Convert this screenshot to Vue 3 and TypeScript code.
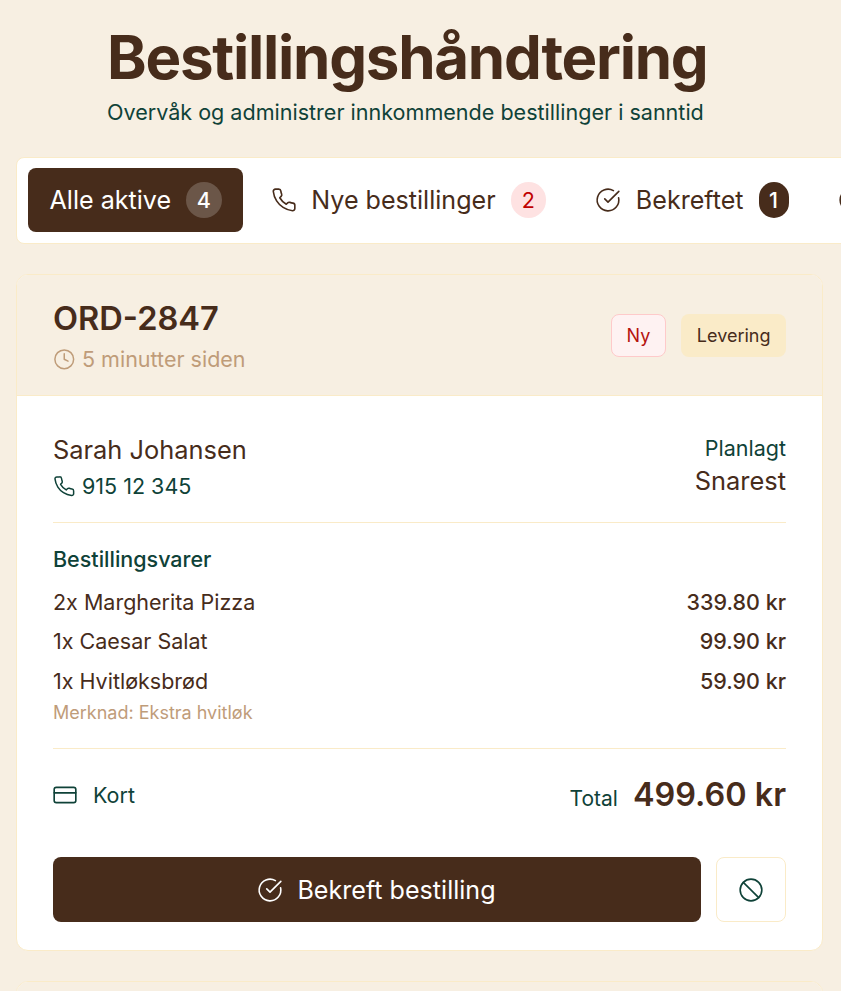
<script setup lang="ts">
const items = [
  { name: '2x Margherita Pizza', price: '339.80 kr' },
  { name: '1x Caesar Salat', price: '99.90 kr' },
  { name: '1x Hvitløksbrød', price: '59.90 kr', note: 'Merknad: Ekstra hvitløk' },
]
</script>

<template>
  <div class="page">
    <header class="head">
      <h1>Bestillingshåndtering</h1>
      <p>Overvåk og administrer innkommende bestillinger i sanntid</p>
    </header>

    <nav class="tabs">
      <button class="tab active">
        <span>Alle aktive</span>
        <span class="count count-glass">4</span>
      </button>
      <button class="tab">
        <svg class="ico" viewBox="0 0 24 24"><path d="M22 16.92v3a2 2 0 0 1-2.18 2 19.79 19.79 0 0 1-8.63-3.07 19.5 19.5 0 0 1-6-6 19.79 19.79 0 0 1-3.07-8.67A2 2 0 0 1 4.11 2h3a2 2 0 0 1 2 1.72 12.84 12.84 0 0 0 .7 2.81 2 2 0 0 1-.45 2.11L8.09 9.91a16 16 0 0 0 6 6l1.27-1.27a2 2 0 0 1 2.11-.45 12.84 12.84 0 0 0 2.81.7A2 2 0 0 1 22 16.92z" /></svg>
        <span>Nye bestillinger</span>
        <span class="count count-red">2</span>
      </button>
      <button class="tab">
        <svg class="ico" viewBox="0 0 24 24"><path d="M21.801 10A10 10 0 1 1 17 3.335" /><path d="m9 11 3 3L22 4" /></svg>
        <span>Bekreftet</span>
        <span class="count count-dark">1</span>
      </button>
      <button class="tab">
        <svg class="ico" viewBox="0 0 24 24"><circle cx="12" cy="12" r="10" /><polyline points="12 6 12 12 16 14" /></svg>
        <span>Tilbereder</span>
        <span class="count count-dark">1</span>
      </button>
    </nav>

    <section v-for="n in 2" :key="n" class="card">
      <div class="card-head">
        <div class="order">
          <h2>ORD-2847</h2>
          <div class="age">
            <svg class="ico ico-sm" viewBox="0 0 24 24"><circle cx="12" cy="12" r="10" /><polyline points="12 6 12 12 16 14" /></svg>
            <span>5 minutter siden</span>
          </div>
        </div>
        <div class="tags">
          <span class="tag tag-new">Ny</span>
          <span class="tag tag-kind">Levering</span>
        </div>
      </div>

      <div class="card-body">
        <div class="customer">
          <div>
            <div class="cust-name">Sarah Johansen</div>
            <div class="cust-phone">
              <svg class="ico ico-sm" viewBox="0 0 24 24"><path d="M22 16.92v3a2 2 0 0 1-2.18 2 19.79 19.79 0 0 1-8.63-3.07 19.5 19.5 0 0 1-6-6 19.79 19.79 0 0 1-3.07-8.67A2 2 0 0 1 4.11 2h3a2 2 0 0 1 2 1.72 12.84 12.84 0 0 0 .7 2.81 2 2 0 0 1-.45 2.11L8.09 9.91a16 16 0 0 0 6 6l1.27-1.27a2 2 0 0 1 2.11-.45 12.84 12.84 0 0 0 2.81.7A2 2 0 0 1 22 16.92z" /></svg>
              <span>915 12 345</span>
            </div>
          </div>
          <div class="sched">
            <div class="sched-label">Planlagt</div>
            <div class="sched-value">Snarest</div>
          </div>
        </div>

        <div class="items">
          <h3>Bestillingsvarer</h3>
          <div v-for="item in items" :key="item.name" class="item">
            <div class="item-row">
              <span>{{ item.name }}</span>
              <span class="price">{{ item.price }}</span>
            </div>
            <div v-if="item.note" class="note">{{ item.note }}</div>
          </div>
        </div>

        <div class="summary">
          <div class="pay">
            <svg class="ico" viewBox="0 0 24 24"><rect x="2" y="5" width="20" height="14" rx="2" /><line x1="2" y1="10" x2="22" y2="10" /></svg>
            <span>Kort</span>
          </div>
          <div class="total">
            <span class="total-label">Total</span>
            <span class="total-value">499.60 kr</span>
          </div>
        </div>

        <div class="actions">
          <button class="confirm">
            <svg class="ico" viewBox="0 0 24 24"><path d="M21.801 10A10 10 0 1 1 17 3.335" /><path d="m9 11 3 3L22 4" /></svg>
            <span>Bekreft bestilling</span>
          </button>
          <button class="cancel" aria-label="Avvis">
            <svg class="ico" viewBox="0 0 24 24"><circle cx="12" cy="12" r="10" /><path d="m4.9 4.9 14.2 14.2" /></svg>
          </button>
        </div>
      </div>
    </section>
  </div>
</template>

<style scoped>
.page {
  box-sizing: border-box;
  width: 841px;
  height: 991px;
  overflow: hidden;
  padding: 0 18px 0 16px;
  background: #f7efe2;
  color: #472c1b;
  font-family: Inter, "Liberation Sans", sans-serif;
}
.head {
  padding: 24px 0 0 91px;
}
h1 {
  margin: 0;
  font-size: 60px;
  line-height: 66px;
  font-weight: 700;
  letter-spacing: -1.25px;
}
.head p {
  margin: 8px 0 0;
  font-size: 21.55px;
  line-height: 29px;
  color: #0f4238;
}
.tabs {
  display: flex;
  gap: 7.7px;
  width: max-content;
  margin-top: 30px;
  padding: 10px 11px 11px;
  background: #fff;
  border: 1px solid #faebc8;
  border-radius: 8px;
}
.tab {
  display: flex;
  align-items: center;
  gap: 15px;
  height: 64px;
  padding: 0 21px 0 21.5px;
  border: 0;
  border-radius: 8px;
  background: transparent;
  color: #472c1b;
  font: 400 25.1px Inter, "Liberation Sans", sans-serif;
}
.tab .ico {
  margin-right: -0.5px;
}
.tab.active {
  background: #472c1b;
  color: #fff;
}
.count {
  display: flex;
  align-items: center;
  justify-content: center;
  min-width: 35.5px;
  height: 36px;
  border-radius: 18px;
  font-size: 21.5px;
  font-weight: 500;
  box-sizing: border-box;
}
.count-glass {
  background: rgba(255, 255, 255, 0.2);
}
.count-red {
  background: #fee2e2;
  color: #c00000;
  font-weight: 400;
}
.count-dark {
  min-width: 30px;
  background: #472c1b;
  color: #fff;
}
.ico {
  flex: none;
  width: 26px;
  height: 26px;
  margin: 0 -1px;
  fill: none;
  stroke: currentColor;
  stroke-width: 1.5;
  stroke-linecap: round;
  stroke-linejoin: round;
}
.ico-sm {
  width: 22.5px;
  height: 22.5px;
  margin: 0;
  stroke-width: 1.6;
}
.card {
  margin-top: 30px;
  background: #fff;
  border: 1px solid #faebc8;
  border-radius: 12px;
  overflow: hidden;
}
.card-head {
  display: flex;
  justify-content: space-between;
  align-items: center;
  height: 121px;
  box-sizing: border-box;
  padding: 0 36px;
  background: #f7efe2;
  border-bottom: 1px solid #faebc8;
}
.order {
  padding-top: 2px;
}
h2 {
  margin: 0;
  font-size: 32.6px;
  line-height: 40px;
  font-weight: 600;
}
.age {
  display: flex;
  align-items: center;
  gap: 6.5px;
  margin-top: 6px;
  color: #bf9c79;
  font-size: 21.5px;
  line-height: 30px;
}
.tags {
  display: flex;
  gap: 15px;
}
.tag {
  display: flex;
  align-items: center;
  box-sizing: border-box;
  height: 43px;
  padding: 0 15.5px;
  border-radius: 8px;
  font-size: 18px;
  font-weight: 400;
}
.tag-new {
  padding: 0 15px;
  background: #fef2f2;
  border: 1px solid #fecaca;
  color: #b5140f;
}
.tag-kind {
  background: #faebc8;
  color: #472c1b;
}
.card-body {
  padding: 36px 36px 28px;
}
.customer {
  display: flex;
  justify-content: space-between;
  padding-bottom: 18px;
  border-bottom: 1px solid #faebc8;
}
.cust-name {
  font-size: 25.4px;
  line-height: 36px;
  font-weight: 400;
}
.cust-phone {
  display: flex;
  align-items: center;
  gap: 6.5px;
  color: #0f4238;
  font-size: 21.5px;
  line-height: 36px;
}
.sched {
  padding-top: 2px;
  text-align: right;
}
.sched-label {
  color: #0f4238;
  font-size: 21.5px;
  line-height: 28px;
}
.sched-value {
  margin-top: 3px;
  font-size: 25.4px;
  line-height: 32px;
  font-weight: 400;
}
.items {
  padding: 20px 0 23px;
  border-bottom: 1px solid #faebc8;
}
h3 {
  margin: 0 0 13px;
  color: #0f4238;
  font-size: 21.5px;
  line-height: 32px;
  font-weight: 500;
}
.item + .item {
  margin-top: 11px;
}
.item:last-child {
  margin-top: 12px;
}
.item-row {
  display: flex;
  justify-content: space-between;
  font-size: 21.5px;
  line-height: 28px;
}
.price {
  font-weight: 500;
}
.note {
  margin-top: 6px;
  color: #bf9c79;
  font-size: 18px;
  line-height: 24px;
}
.summary {
  display: flex;
  justify-content: space-between;
  align-items: center;
  padding: 24px 0 0;
}
.pay {
  display: flex;
  align-items: center;
  gap: 16px;
  color: #0f4238;
  font-size: 21.5px;
}
.total {
  display: flex;
  align-items: baseline;
  gap: 15px;
}
.total-label {
  color: #0f4238;
  font-size: 21px;
}
.total-value {
  font-size: 32.4px;
  line-height: 44px;
  font-weight: 600;
}
.actions {
  display: flex;
  gap: 15px;
  margin-top: 40px;
}
.confirm {
  flex: 1;
  display: flex;
  align-items: center;
  justify-content: center;
  gap: 15px;
  height: 65px;
  border: 0;
  border-radius: 8px;
  background: #472c1b;
  color: #fff;
  font: 400 25.1px Inter, "Liberation Sans", sans-serif;
}
.cancel {
  display: flex;
  align-items: center;
  justify-content: center;
  width: 70px;
  height: 65px;
  padding: 0;
  border: 1px solid #faebc8;
  border-radius: 8px;
  background: #fff;
  color: #0f4238;
}
</style>
